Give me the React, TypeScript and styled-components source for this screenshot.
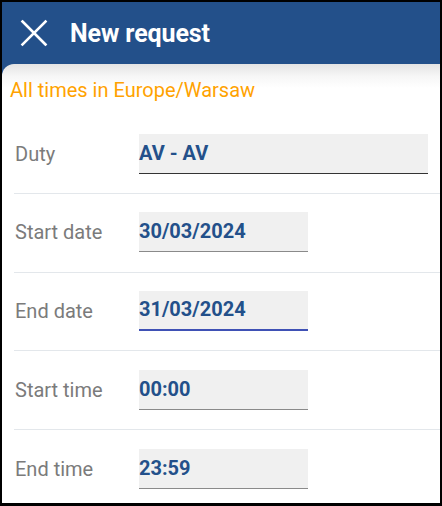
import React, { FC } from "react";
import styled, { createGlobalStyle } from "styled-components";

const GlobalStyle = createGlobalStyle`
  html, body {
    margin: 0;
    padding: 0;
    background: #000;
  }
  * {
    box-sizing: border-box;
  }
`;

const Frame = styled.div`
  width: 442px;
  height: 506px;
  border: 2px solid #000;
  border-bottom-width: 3px;
  background: #23508a;
  display: flex;
  flex-direction: column;
  overflow: hidden;
  font-family: Roboto, "Liberation Sans", sans-serif;
`;

const Header = styled.header`
  height: 62px;
  flex: none;
  display: flex;
  align-items: center;
  padding-left: 18px;
  gap: 22px;
  color: #fff;
`;

const Title = styled.h1`
  margin: 0;
  font-size: 25px;
  font-weight: 700;
  letter-spacing: -0.1px;
`;

const Panel = styled.main`
  flex: 1;
  border-top-left-radius: 12px;
  background: linear-gradient(#e4e4e4 0px, #f6f6f6 12px, #ffffff 24px);
  padding-top: 13px;
`;

const Zone = styled.p`
  margin: 0 0 12px 8px;
  font-size: 20px;
  line-height: 26px;
  color: #ffa200;
`;

const Row = styled.div<{ $last?: boolean }>`
  display: flex;
  align-items: center;
  margin-left: 12px;
  padding: 18.5px 0 19.25px;
  border-bottom: ${(p) => (p.$last ? "none" : "1px solid #e3e7eb")};
`;

const Label = styled.span`
  width: 125px;
  flex: none;
  padding-left: 1px;
  font-size: 20px;
  color: #7b7b7b;
`;

const Field = styled.div<{ $width: number; $line: string; $thick?: boolean }>`
  width: ${(p) => p.$width}px;
  height: 40px;
  display: flex;
  align-items: center;
  padding: 0 0 ${(p) => (p.$thick ? 2 : 1)}px 0;
  background: #f0f0f0;
  border-bottom: ${(p) => (p.$thick ? 2 : 1)}px solid ${(p) => p.$line};
  font-size: 20px;
  font-weight: 700;
  color: #23508a;
`;

const CloseIcon: FC = () => (
  <svg width="28" height="28" viewBox="0 0 28 28" aria-hidden="true">
    <path d="M2.5 2.5 L25.5 25.5 M25.5 2.5 L2.5 25.5" stroke="#fff" strokeWidth="2.6" strokeLinecap="square" />
  </svg>
);

const rows = [
  { label: "Duty", value: "AV - AV", width: 289, line: "#333333" },
  { label: "Start date", value: "30/03/2024", width: 169, line: "#8a8a8a" },
  { label: "End date", value: "31/03/2024", width: 169, line: "#3f51b5", thick: true },
  { label: "Start time", value: "00:00", width: 169, line: "#8a8a8a" },
  { label: "End time", value: "23:59", width: 169, line: "#8a8a8a" },
];

const App: FC = () => {
  return (
    <>
      <GlobalStyle />
      <Frame>
        <Header>
          <CloseIcon />
          <Title>New request</Title>
        </Header>
        <Panel>
          <Zone>All times in Europe/Warsaw</Zone>
          {rows.map((r, i) => (
            <Row key={r.label} $last={i === rows.length - 1}>
              <Label>{r.label}</Label>
              <Field $width={r.width} $line={r.line} $thick={r.thick}>
                {r.value}
              </Field>
            </Row>
          ))}
        </Panel>
      </Frame>
    </>
  );
};

export default App;
